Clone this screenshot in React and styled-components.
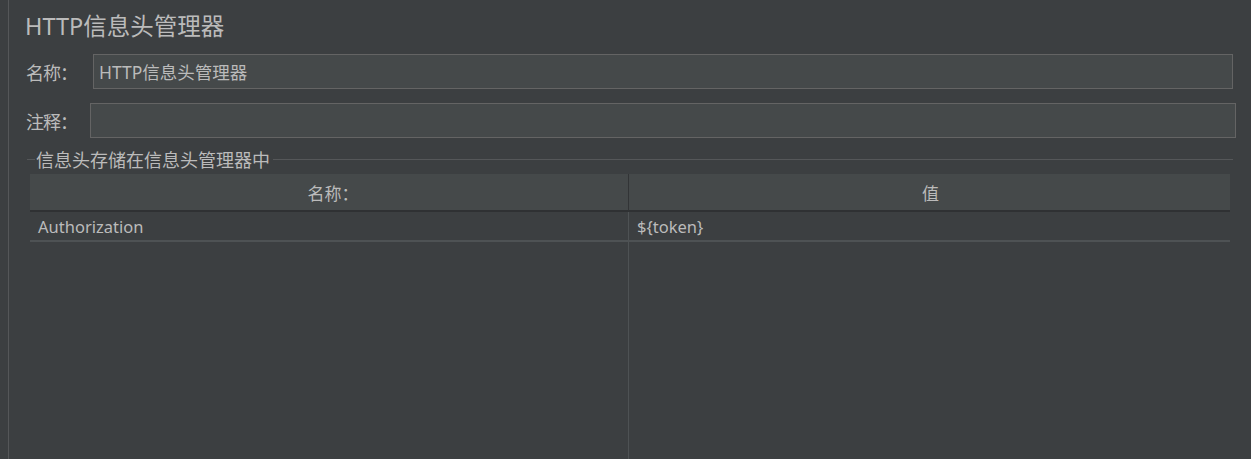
import React from "react";
import styled, { createGlobalStyle } from "styled-components";

const Global = createGlobalStyle`
  html, body {
    margin: 0;
    padding: 0;
    background: #3c3f41;
  }
  body {
    font-family: "Noto Sans", "Noto Sans CJK SC", sans-serif;
    color: #bbbbbb;
  }
`;

const Page = styled("div")`
  display: flex;
  height: 459px;
  overflow: hidden;
  background: #3c3f41;
`;

const Gutter = styled("div")`
  width: 8px;
  border-right: 1px solid #555759;
  flex-shrink: 0;
`;

const Content = styled("div")`
  flex: 1;
  display: flex;
  flex-direction: column;
  padding: 0 15px 0 16px;
  min-width: 0;
`;

const Title = styled("h1")`
  margin: 0;
  padding-top: 10px;
  height: 32px;
  font-size: 23.5px;
  font-weight: normal;
  line-height: 32px;
  color: #bbbbbb;
`;

const Field = styled("div")`
  display: flex;
  align-items: center;
  margin-top: ${p => p.top}px;
  padding-right: ${p => p.right}px;
`;

const Label = styled("span")`
  font-size: 18px;
  width: ${p => p.width}px;
  flex-shrink: 0;
  padding-left: 1px;
  letter-spacing: -1px;
`;

const TextBox = styled("div")`
  flex: 1;
  height: 33px;
  border: 1px solid #646464;
  background: #45494a;
  display: flex;
  align-items: center;
  padding-left: 5px;
  font-size: 17.5px;
  color: #bbbbbb;
`;

const Group = styled("div")`
  margin-top: 11px;
  display: flex;
  flex-direction: column;
  flex: 1;
  padding-left: 5px;
  padding-right: 6px;
`;

const Legend = styled("div")`
  display: flex;
  align-items: center;
  height: 20px;
  margin-left: -3px;
  margin-right: -3px;
  font-size: 18px;
  &::before {
    content: "";
    width: 8px;
    height: 1px;
    background: #555759;
    margin-right: 1px;
  }
  &::after {
    content: "";
    flex: 1;
    height: 1px;
    background: #555759;
    margin-left: 3px;
  }
`;

const Table = styled("div")`
  margin-top: 5px;
  display: grid;
  grid-template-columns: 599px 1fr;
  grid-template-rows: 38px 30px 1fr;
  flex: 1;
`;

const HeadCell = styled("div")`
  background: #45494a;
  border-bottom: 2px solid #2f3133;
  border-right: ${p => (p.last ? "none" : "1px solid #323436")};
  display: flex;
  align-items: center;
  justify-content: center;
  padding-left: ${p => (p.last ? 2 : 8)}px;
  font-size: 17px;
  color: #bbbbbb;
`;

const Cell = styled("div")`
  border-bottom: 2px solid #4e5254;
  border-right: ${p => (p.last ? "none" : "1px solid #4e5254")};
  display: flex;
  align-items: center;
  padding-left: 8px;
  font-size: 16.5px;
  color: #bbbbbb;
`;

const Filler = styled("div")`
  border-right: ${p => (p.last ? "none" : "1px solid #4e5254")};
`;

const rows = [{ name: "Authorization", value: "${token}" }];

export default () => {
  return (
    <Page>
      <Global />
      <Gutter />
      <Content>
        <Title>HTTP信息头管理器</Title>
        <Field top={12} right={3}>
          <Label width={67}>名称：</Label>
          <TextBox>HTTP信息头管理器</TextBox>
        </Field>
        <Field top={14} right={0}>
          <Label width={64}>注释：</Label>
          <TextBox />
        </Field>
        <Group>
          <Legend>信息头存储在信息头管理器中</Legend>
          <Table>
            <HeadCell>名称：</HeadCell>
            <HeadCell last>值</HeadCell>
            {rows.map(row => (
              <React.Fragment key={row.name}>
                <Cell>{row.name}</Cell>
                <Cell last>{row.value}</Cell>
              </React.Fragment>
            ))}
            <Filler />
            <Filler last />
          </Table>
        </Group>
      </Content>
    </Page>
  );
};
